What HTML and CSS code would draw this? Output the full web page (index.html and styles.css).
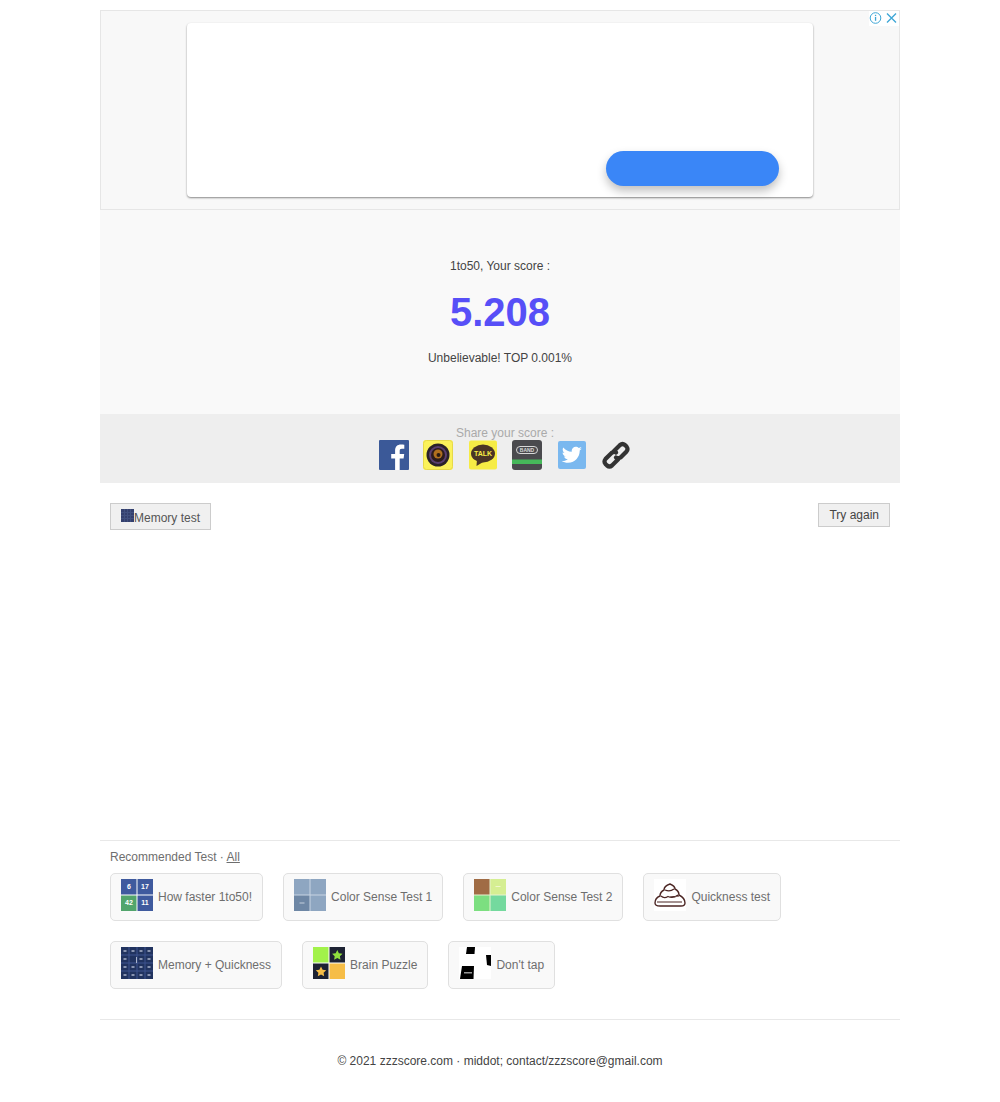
FILE: index.html
```html
<!DOCTYPE html>
<html lang="en">
<head>
    <meta charset="UTF-8">
    <title>1to50 score</title>
    <link rel="stylesheet" href="styles.css">
</head>
<body>
<div class="wrap">

    <!-- ad -->
    <div class="ad">
        <div class="ad-close">
            <svg width="14" height="14" viewBox="0 0 14 14"><circle cx="6.500" cy="7" r="5.300" fill="none" stroke="#3fa7d6" stroke-width="1"/><rect x="5.900" y="6" width="1.300" height="3.800" fill="#3fa7d6"/><rect x="5.900" y="3.800" width="1.300" height="1.300" fill="#3fa7d6"/></svg>
            <svg width="14" height="14" viewBox="0 0 14 14"><path d="M3 2.500 L12 11.500 M12 2.500 L3 11.500" stroke="#3fa7d6" stroke-width="1.400"/></svg>
        </div>
        <div class="ad-card"><div class="ad-btn"></div></div>
    </div>

    <!-- score -->
    <div class="score">
        <div class="score-label">1to50, Your score :</div>
        <div class="score-num">5.208</div>
        <div class="score-msg">Unbelievable! TOP 0.001%</div>
    </div>

    <!-- share -->
    <div class="share">
        <div class="share-title">Share your score :</div>
        <div class="share-icons">
            <svg class="sicon" width="30" height="30" viewBox="0 0 30 30"><rect width="30" height="30" rx="1" fill="#3b5998"/><path d="M20.700 30V18.400h3.900l.6-4.500h-4.500V11c0-1.300.4-2.200 2.200-2.200h2.400v-4c-.4-.1-1.800-.2-3.400-.2-3.400 0-5.800 2.100-5.800 5.900v3.400h-3.900v4.500h3.900V30z" fill="#fff"/></svg>
            <svg class="sicon sicon-near" width="30" height="30" viewBox="0 0 30 30"><rect width="30" height="30" rx="3" fill="#fbf25a"/><rect x="0.500" y="0.500" width="29" height="29" rx="3" fill="none" stroke="#e6d94a" stroke-width="1"/><circle cx="15" cy="15" r="11.500" fill="#2a2228"/><circle cx="15" cy="15" r="9" fill="#5a3f70"/><circle cx="15" cy="15" r="7" fill="#2c1c1c"/><circle cx="15" cy="14" r="4.500" fill="#b0701e"/><circle cx="15.500" cy="15" r="2" fill="#2a1a12"/></svg>
            <svg class="sicon sicon-far" width="28" height="30" viewBox="0 0 28 30"><rect y="0.500" width="28" height="29" rx="2" fill="#f6ec45"/><ellipse cx="14" cy="13.500" rx="12" ry="9" fill="#4a3526"/><path d="M8 19 L7.500 26 L15 21.500z" fill="#4a3526"/><text x="14" y="16.300" text-anchor="middle" class="talk">TALK</text></svg>
            <svg class="sicon" width="30" height="30" viewBox="0 0 30 30"><rect width="30" height="30" rx="3" fill="#4a4a4e"/><rect x="4.500" y="6.500" width="21" height="7" rx="3.500" fill="none" stroke="#d8d8d8" stroke-width="1"/><text x="15" y="12.200" text-anchor="middle" class="band">BAND</text><rect y="19.500" width="30" height="4.500" fill="#46b75a"/></svg>
            <svg class="sicon sicon-far" width="28" height="28" viewBox="0 0 28 28"><rect width="28" height="28" rx="2" fill="#7ab8ef"/><path d="M24 7.600c-.8.4-1.600.6-2.400.7.9-.5 1.500-1.300 1.800-2.300-.8.5-1.700.8-2.600 1-.8-.8-1.900-1.300-3-1.300-2.300 0-4.100 1.800-4.100 4.100 0 .3 0 .6.1.9-3.400-.2-6.500-1.800-8.500-4.300-.4.6-.6 1.300-.6 2.100 0 1.400.7 2.700 1.800 3.400-.7 0-1.300-.2-1.900-.5v.1c0 2 1.400 3.600 3.300 4-.3.1-.7.1-1.100.1-.3 0-.5 0-.8-.1.5 1.600 2 2.800 3.800 2.800-1.400 1.100-3.200 1.800-5.100 1.800-.3 0-.7 0-1-.1 1.800 1.200 4 1.800 6.300 1.800 7.500 0 11.700-6.200 11.700-11.700v-.5c.8-.6 1.500-1.300 2.300-2.100z" fill="#fff"/></svg>
            <svg class="sicon" width="30" height="30" viewBox="0 0 30 30"><g fill="none" stroke="#333" stroke-width="4.200" stroke-linecap="round"><path d="M13 11 L19 5 Q21.500 3 24 5 L25.500 6.500 Q27.500 9 25.500 11.500 L19.500 17.500 Q17 19 15 17.500"/><path d="M17 19.500 L11 25.500 Q8.500 27.500 6 25.500 L4.500 24 Q2.500 21.500 4.500 19 L10.500 13 Q13 11 15 12.500"/></g></svg>
        </div>
    </div>

    <!-- buttons -->
    <div class="actions">
        <a class="btn btn-memory">
            <svg width="13" height="13" viewBox="0 0 13 13"><rect width="13" height="13" fill="#34406e"/><path d="M3.500 0V13M6.500 0V13M9.500 0V13M0 3.500H13M0 6.500H13M0 9.500H13" stroke="#41507f" stroke-width="1"/></svg>Memory test
        </a>
        <a class="btn">Try again</a>
    </div>

    <!-- recommended -->
    <div class="rec">
        <div class="rec-title">Recommended Test · <a class="rec-all">All</a></div>
        <div class="rec-list">
            <a class="rec-item">
                <svg class="thumb" width="32" height="32" viewBox="0 0 32 32">
                    <rect width="32" height="32" fill="#fff"/>
                    <rect width="15.500" height="15.500" fill="#3f5a9e"/><rect x="16.500" width="15.500" height="15.500" fill="#3f5a9e"/>
                    <rect y="16.500" width="15.500" height="15.500" fill="#52a56c"/><rect x="16.500" y="16.500" width="15.500" height="15.500" fill="#3f5a9e"/>
                    <text x="8" y="10" class="num">6</text><text x="24" y="10" class="num">17</text><text x="8" y="26" class="num">42</text><text x="24" y="26" class="num">11</text>
                </svg>
                How faster 1to50!
            </a>
            <a class="rec-item">
                <svg class="thumb" width="32" height="32" viewBox="0 0 32 32">
                    <rect width="32" height="32" fill="#c8d4e2"/>
                    <rect width="15.500" height="15.500" fill="#8ea6c1"/><rect x="16.500" width="15.500" height="15.500" fill="#8ea6c1"/>
                    <rect y="16.500" width="15.500" height="15.500" fill="#6e87a5"/><rect x="16.500" y="16.500" width="15.500" height="15.500" fill="#8ea6c1"/>
                    <rect x="5.500" y="23.500" width="5" height="1" fill="#c4d0de"/>
                </svg>
                Color Sense Test 1
            </a>
            <a class="rec-item">
                <svg class="thumb" width="32" height="32" viewBox="0 0 32 32">
                    <rect width="32" height="32" fill="#e6f2d0"/>
                    <rect width="15.500" height="15.500" fill="#a06c45"/><rect x="16.500" width="15.500" height="15.500" fill="#d5ee92"/>
                    <rect y="16.500" width="15.500" height="15.500" fill="#7cdf80"/><rect x="16.500" y="16.500" width="15.500" height="15.500" fill="#74d99e"/>
                    <rect x="21.500" y="7" width="5" height="1" fill="#eef7cc"/>
                </svg>
                Color Sense Test 2
            </a>
            <a class="rec-item">
                <svg class="thumb" width="32" height="32" viewBox="0 0 32 32">
                    <rect width="32" height="32" fill="#fff"/>
                    <path d="M16 5 Q21 7 21 10 Q25 12 25 16 Q31 19 31 24 Q31 27 27 27 L6 27 Q1 27 1 24 Q1 19 6 17 Q6 13 10 11 Q10 7 16 5z" fill="#fff" stroke="#4b2523" stroke-width="1.400"/>
                    <path d="M11 11 Q16 13 20 10 M7 17 Q10 20 14 17.500 Q19 20 24 16 M15 18 L25 17 M3 23 L28 23" fill="none" stroke="#4b2523" stroke-width="1.200"/>
                </svg>
                Quickness test
            </a>
            <a class="rec-item">
                <svg class="thumb" width="32" height="32" viewBox="0 0 32 32">
                    <rect width="32" height="32" fill="#21335f"/>
                    <path d="M8 0V32M16 0V32M24 0V32M0 8H32M0 16H32M0 24H32" stroke="#3f5590" stroke-width="1"/>
                    <path d="M2.500 4h3M10.500 4h3M18.500 4h3M26.500 4h3M2.500 12h3M18.500 12h3M26.500 12h3M2.500 20h3M10.500 20h3M18.500 20h3M26.500 20h3M2.500 28h3M10.500 28h3M18.500 28h3M26.500 28h3" stroke="#aab4cc" stroke-width="1.500"/>
                    <path d="M15.500 10v6" stroke="#aab4cc" stroke-width="1"/>
                </svg>
                Memory + Quickness
            </a>
            <a class="rec-item">
                <svg class="thumb" width="32" height="32" viewBox="0 0 32 32">
                    <rect width="32" height="32" fill="#fff"/>
                    <rect width="15.500" height="15.500" fill="#a2f24a"/><rect x="16.500" width="15.500" height="15.500" fill="#1d2233"/>
                    <rect y="16.500" width="15.500" height="15.500" fill="#1d2233"/><rect x="16.500" y="16.500" width="15.500" height="15.500" fill="#f6bd47"/>
                    <polygon points="24.300,3 25.900,6.300 29.500,6.800 26.900,9.300 27.500,12.800 24.300,11.100 21.100,12.800 21.700,9.300 19.100,6.800 22.700,6.300" fill="#8fdf3e"/>
                    <polygon points="8,19.500 9.600,22.800 13.200,23.300 10.600,25.800 11.200,29.300 8,27.600 4.800,29.300 5.400,25.800 2.800,23.300 6.400,22.800" fill="#f6bd47"/>
                </svg>
                Brain Puzzle
            </a>
            <a class="rec-item">
                <svg class="thumb" width="32" height="32" viewBox="0 0 32 32">
                    <rect width="32" height="32" fill="#fff"/>
                    <polygon points="8,0 16,0 15.500,7 7,7" fill="#000"/>
                    <polygon points="27,8 32,8 32,19 28,18" fill="#000"/>
                    <polygon points="3,19 15,19 14.500,32 1,32" fill="#000"/>
                    <rect x="5" y="25" width="8" height="1.500" fill="#999"/>
                </svg>
                Don't tap
            </a>
        </div>
    </div>

    <div class="footer">© 2021 zzzscore.com · middot; contact/zzzscore@gmail.com</div>
</div>
</body>
</html>
```

FILE: styles.css
```css
/* Global */
body {
    margin: 0;
    background-color: #fff;
    font-family: "Liberation Sans", Arial, sans-serif;
    font-size: 12px;
    color: #444;
}

.wrap {
    width: 800px;
    margin: 10px auto 0;
}

/* Ad */
.ad {
    position: relative;
    height: 200px;
    box-sizing: border-box;
    padding-top: 12px;
    background-color: #f8f8f8;
    border: 1px solid #e6e6e6;
}

.ad-close {
    position: absolute;
    top: 0;
    right: 0;
    display: flex;
    gap: 1px;
    padding: 0 1px 1px 0;
    background-color: #fff;
}

.ad-card {
    position: relative;
    width: 626px;
    height: 174px;
    margin-left: 86px;
    background-color: #fff;
    border-radius: 4px;
    box-shadow: 0 1px 2px rgba(0, 0, 0, 0.45);
}

.ad-btn {
    position: absolute;
    left: 419px;
    top: 128px;
    width: 173px;
    height: 35px;
    background-color: #3a86f7;
    border-radius: 18px;
    box-shadow: 0 5px 10px rgba(0, 0, 0, 0.25);
}

/* Score */
.score {
    height: 204px;
    box-sizing: border-box;
    padding-top: 49px;
    background-color: #f9f9f9;
    text-align: center;
}

.score-label {
    line-height: 14px;
}

.score-num {
    margin-top: 16px;
    font-size: 40px;
    font-weight: bold;
    line-height: 46px;
    color: #574ff7;
}

.score-msg {
    margin-top: 16px;
    line-height: 14px;
}

/* Share */
.share {
    height: 69px;
    box-sizing: border-box;
    padding: 12px 0 0 10px;
    background-color: #eee;
    text-align: center;
}

.share-title {
    line-height: 14px;
    color: #aaa;
}

.share-icons {
    display: flex;
    justify-content: center;
    align-items: center;
    gap: 15px;
}

.sicon {
    display: block;
    flex: none;
}

.sicon-near {
    margin-left: -1px;
}

.sicon-far {
    margin-left: 1px;
}

.talk {
    font-size: 7px;
    font-weight: bold;
    fill: #f6ec45;
}

.band {
    font-size: 5px;
    font-weight: bold;
    fill: #d8d8d8;
}

/* Buttons */
.actions {
    display: flex;
    justify-content: space-between;
    align-items: flex-start;
    height: 358px;
    box-sizing: border-box;
    padding: 20px 10px 0;
    border-bottom: 1px solid #e8e8e8;
}

.btn {
    display: block;
    padding: 4px 10px;
    line-height: 14px;
    background-color: #f0f0f0;
    border: 1px solid #ccc;
    color: #444;
}

.btn-memory {
    padding-top: 5px;
    padding-bottom: 4px;
    color: #555;
}

.btn-memory svg {
    vertical-align: 0;
}

/* Recommended */
.rec {
    padding: 9px 10px 30px;
    border-bottom: 1px solid #e8e8e8;
}

.rec-title {
    line-height: 14px;
    color: #6e6e6e;
}

.rec-all {
    color: #6e6e6e;
    text-decoration: underline;
}

.rec-list {
    display: flex;
    flex-wrap: wrap;
    gap: 20px;
    margin-top: 9px;
}

.rec-item {
    display: flex;
    align-items: center;
    gap: 5px;
    height: 48px;
    box-sizing: border-box;
    padding: 0 10px;
    background-color: #f9f9f9;
    border: 1px solid #e0e0e0;
    border-radius: 5px;
    color: #6e6e6e;
}

.thumb {
    display: block;
    flex: none;
    margin-bottom: 4px;
}

.num {
    font-size: 7px;
    font-weight: bold;
    fill: #fff;
    text-anchor: middle;
}

/* Footer */
.footer {
    padding-top: 34px;
    line-height: 14px;
    text-align: center;
}
```
